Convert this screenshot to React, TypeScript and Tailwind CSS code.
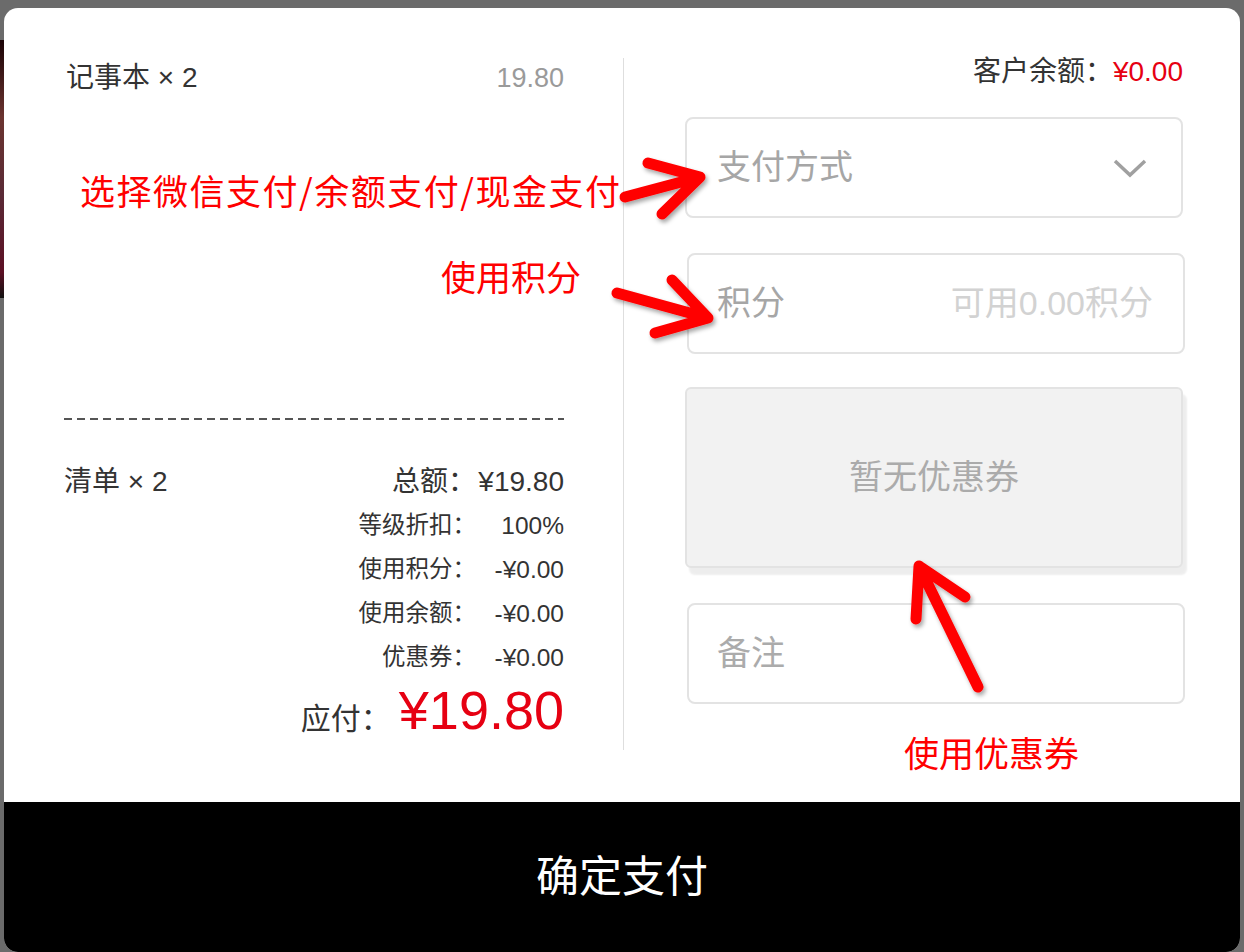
import React from "react";

const uiFont = "font-['Liberation_Sans','Noto_Sans_CJK_SC',sans-serif]";
const noteFont = "font-['Noto_Sans_CJK_SC',sans-serif]";

function SummaryRow({ label, value, big }: { label: string; value: string; big?: boolean }) {
  return (
    <div className="flex justify-end items-center h-[44px]">
      <span className={big ? "text-[28px]" : "text-[23.5px]"}>{label}</span>
      <span className={`w-[88px] text-right ${big ? "text-[28px]" : "text-[24.5px]"}`}>{value}</span>
    </div>
  );
}

function Arrows() {
  return (
    <svg className="pointer-events-none absolute inset-0" width={1244} height={952} viewBox="0 0 1244 952">
      <defs>
        <filter id="sh" x="-20%" y="-20%" width="140%" height="140%">
          <feDropShadow dx="2" dy="3" stdDeviation="2" floodColor="#000" floodOpacity="0.35" />
        </filter>
      </defs>
      <g fill="none" stroke="#ff0000" strokeWidth={11} strokeLinecap="round" strokeLinejoin="round" filter="url(#sh)">
        <path d="M625 197 L700 177 M648 163 L700 177 L662 214" />
        <path d="M617 293 L708 318 M672 280 L708 318 L655 333" />
        <path d="M978 687 L919 566 M916 619 L919 566 L965 597" />
      </g>
    </svg>
  );
}

export default function App() {
  return (
    <div className={`relative w-[1244px] h-[952px] overflow-hidden bg-[#6b6b6b] flex ${uiFont} text-[#333]`}>
      {/* page behind the modal */}
      <div className="w-[4px] shrink-0 pt-[40px]">
        <div className="h-[258px] bg-[linear-gradient(to_bottom,#1a0306,#6b3430_30%,#5a2a36_60%,#5c1024_90%,#111)]" />
      </div>

      <div className="mt-[8px] w-[1236px] h-[944px] shrink-0 rounded-[14px] bg-white overflow-hidden flex flex-col">
        <div className="flex h-[794px]">
          {/* left: order */}
          <div className="w-[619px] shrink-0 pl-[60px] pr-[59px] pt-[52px] flex flex-col">
            <div className="flex justify-between items-center h-[36px] text-[28px]">
              <span className="pl-[2px]">记事本 × 2</span>
              <span className="text-[#9a9a9a] text-[27px]">19.80</span>
            </div>

            <div className="mt-[322px] h-[2px] bg-[linear-gradient(to_right,#555_8px,transparent_8px)] bg-[length:13px_2px]" />

            <div className="mt-[40px] flex justify-between items-start">
              <span className="text-[28px] leading-[44px]">清单 × 2</span>
              <div className="flex flex-col">
                <SummaryRow label="总额：" value="¥19.80" big />
                <SummaryRow label="等级折扣：" value="100%" />
                <SummaryRow label="使用积分：" value="-¥0.00" />
                <SummaryRow label="使用余额：" value="-¥0.00" />
                <SummaryRow label="优惠券：" value="-¥0.00" />
                <div className="flex justify-end items-baseline h-[60px]">
                  <span className="text-[30px] mr-[8px]">应付：</span>
                  <span className="text-[54px] leading-[60px] text-[#e60012]">¥19.80</span>
                </div>
              </div>
            </div>
          </div>

          <div className="self-start mt-[50px] w-px h-[692px] bg-[#dedede]" />

          {/* right: payment */}
          <div className="w-[616px] shrink-0 pl-[61px] pt-[46px] flex flex-col">
            <div className="w-[498px] h-[36px] flex justify-end items-center text-[28px]">
              <span>客户余额：</span>
              <span className="text-[#e60012]">¥0.00</span>
            </div>

            <div className="mt-[27px] w-[498px] h-[101px] rounded-[8px] border-2 border-[#e3e3e3] flex items-center justify-between pl-[30px] pr-[34px]">
              <span className="text-[34px] text-[#a6a6a6]">支付方式</span>
              <svg width="34" height="22" viewBox="0 0 34 22">
                <polyline points="2,4 17,18 32,4" fill="none" stroke="#a0a0a0" strokeWidth="3.5" />
              </svg>
            </div>

            <div className="mt-[35px] ml-[2px] w-[498px] h-[101px] rounded-[8px] border-2 border-[#e3e3e3] flex items-center justify-between pl-[28px] pr-[30px]">
              <span className="text-[34px] text-[#a6a6a6]">积分</span>
              <span className="text-[34px] text-[#d2d2d2]">可用0.00积分</span>
            </div>

            <div className="mt-[33px] w-[498px] h-[181px] rounded-[6px] border-2 border-[#e3e3e3] bg-[#f2f2f2] shadow-[4px_7px_2px_rgba(0,0,0,0.07)] flex items-center justify-center">
              <span className="text-[34px] text-[#ababab]">暂无优惠券</span>
            </div>

            <div className="mt-[35px] ml-[2px] w-[498px] h-[101px] rounded-[8px] border-2 border-[#e3e3e3] flex items-center pl-[28px]">
              <span className="text-[34px] text-[#ababab]">备注</span>
            </div>
          </div>
        </div>

        <button className="h-[150px] w-full bg-black text-white text-[43px] flex items-center justify-center">
          确定支付
        </button>
      </div>

      {/* annotation callouts */}
      <span className={`absolute left-[80px] top-[168px] text-[35px] leading-[44px] tracking-[1.5px] text-[#ff0000] ${noteFont}`}>
        选择微信支付/余额支付/现金支付
      </span>
      <span className={`absolute left-[441px] top-[254px] text-[35px] leading-[44px] text-[#ff0000] ${noteFont}`}>
        使用积分
      </span>
      <span className={`absolute left-[904px] top-[730px] text-[35px] leading-[44px] text-[#ff0000] ${noteFont}`}>
        使用优惠券
      </span>
      <Arrows />
    </div>
  );
}
